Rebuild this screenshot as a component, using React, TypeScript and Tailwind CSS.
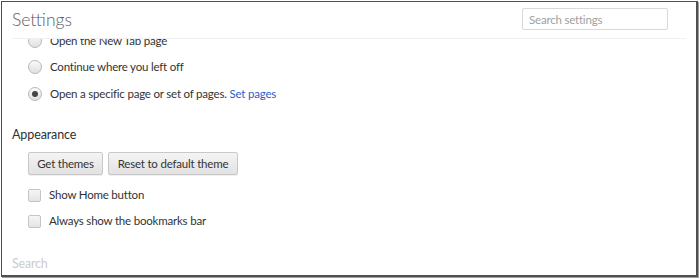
import React from "react";

function Radio({ checked }: { checked?: boolean }) {
  return (
    <span className="flex h-[14px] w-[14px] shrink-0 items-center justify-center rounded-full border border-[#b8b8b8] bg-gradient-to-b from-[#fafafa] to-[#e0e0e0]">
      {checked && <span className="h-[6px] w-[6px] rounded-full bg-[#444]" />}
    </span>
  );
}

function Checkbox() {
  return (
    <span className="h-[13px] w-[13px] shrink-0 rounded-[2px] border border-[#c4c4c4] bg-gradient-to-b from-[#f6f6f6] to-[#e4e4e4]" />
  );
}

function Button({ label, width }: { label: string; width: string }) {
  return (
    <button
      className={`${width} h-[23px] rounded-[2px] border border-[#c8c8c8] bg-gradient-to-b from-[#f4f4f4] to-[#e2e2e2] text-[11.5px] tracking-[-0.2px] text-[#333] shadow-[0_1px_0_rgba(0,0,0,0.06)]`}
    >
      {label}
    </button>
  );
}

export default function App() {
  return (
    <div className="h-[279px] w-[700px] bg-white pl-[1px] pt-[1px] font-['Lato','Open_Sans',sans-serif] text-[#333]">
      <div className="flex h-[276px] w-[697px] flex-col overflow-hidden border border-r-2 border-b-2 border-[#505050] shadow-[1px_1px_0_#a0a0a0]">
        <header className="relative z-10 mx-[10px] flex h-[37px] shrink-0 items-center justify-between border-b border-[#f0f0f0] bg-white">
          <h1 className="text-[17.5px] font-light text-[#5c5c5c]">Settings</h1>
          <input
            placeholder="Search settings"
            className="mr-[18px] mt-[-2px] h-[22px] w-[146px] rounded-[2px] border border-[#d9d9d9] px-[6px] text-[11.5px] tracking-[-0.2px] placeholder:text-[#a0a0a0] outline-none"
          />
        </header>
        <main className="flex flex-1 flex-col overflow-hidden px-[10px] text-[11.5px] tracking-[-0.2px]">
          <div className="mt-[-11px] flex flex-col pl-[16px]">
            <label className="flex h-[26px] items-center gap-[8px]">
              <Radio />
              <span>Open the New Tab page</span>
            </label>
            <label className="flex h-[26px] items-center gap-[8px]">
              <Radio />
              <span>Continue where you left off</span>
            </label>
            <label className="flex h-[27px] items-center gap-[8px]">
              <Radio checked />
              <span>
                Open a specific page or set of pages.{" "}
                <a className="text-[#2a62c9]">Set pages</a>
              </span>
            </label>
          </div>
          <h3 className="mt-[19px] h-[18px] text-[12.5px] leading-[18px] tracking-[-0.1px] text-[#303030]">Appearance</h3>
          <div className="mt-[8px] flex gap-[5px] pl-[16px]">
            <Button label="Get themes" width="w-[75px]" />
            <Button label="Reset to default theme" width="w-[130px]" />
          </div>
          <div className="mt-[7px] flex flex-col pl-[16px]">
            <label className="flex h-[26px] items-center gap-[8px]">
              <Checkbox />
              <span>Show Home button</span>
            </label>
            <label className="flex h-[26px] items-center gap-[8px]">
              <Checkbox />
              <span>Always show the bookmarks bar</span>
            </label>
          </div>
          <h3 className="mt-auto mb-[2px] h-[18px] text-[12.5px] leading-[18px] text-[#cccccc]">Search</h3>
        </main>
      </div>
    </div>
  );
}
